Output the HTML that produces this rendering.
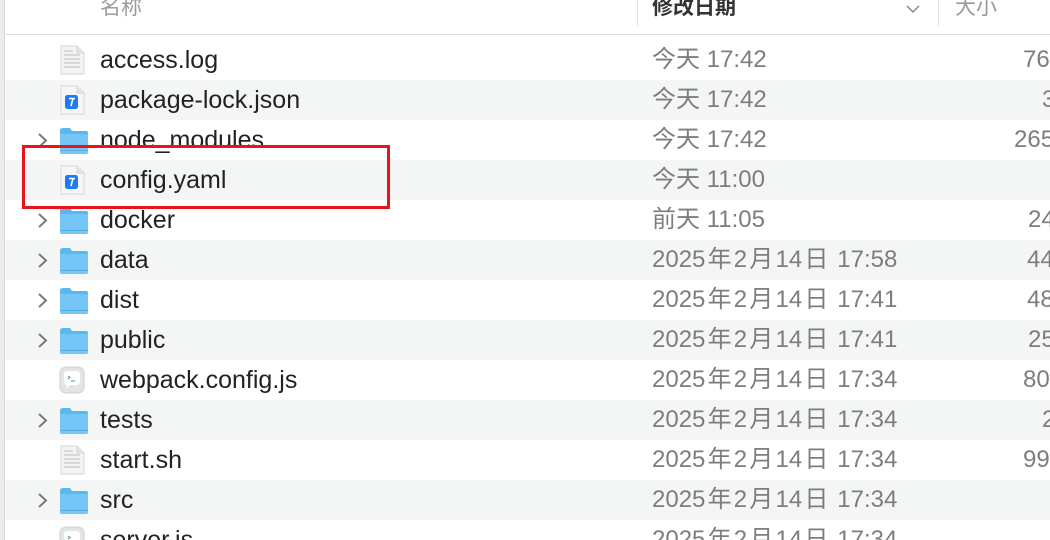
<!DOCTYPE html>
<html style="overflow:hidden;width:1050px;height:540px"><head><meta charset="utf-8"><style>
*{margin:0;padding:0;box-sizing:border-box}
body{width:1050px;height:540px;overflow:hidden;background:#fff;position:relative;font-family:"Liberation Sans","Noto Sans CJK SC",sans-serif}
.strip{position:absolute;left:0;top:0;width:5px;height:540px;background:#ececec;border-right:1px solid #d8d8d8}
.hdr{position:absolute;left:6px;top:0;width:1044px;height:35px;border-bottom:1px solid #dcdcdc;background:#fff}
.h{position:absolute;top:-9px;font-size:21px;line-height:34px;color:#9a9a9a}
.sep{position:absolute;top:0;width:1px;height:26px;background:#e2e2e2}
.row{position:absolute;left:6px;width:1044px;height:40px;overflow:hidden}
.g{background:#f4f5f5}
.n{position:absolute;left:94px;top:0;line-height:40px;font-size:25px;color:#222}
.d{position:absolute;left:646px;top:0;line-height:40px;font-size:24px;color:#7d7d7d;white-space:nowrap}
.d i{font-style:normal;margin:0 2.2px}
.s{position:absolute;top:0;line-height:40px;font-size:24px;color:#7d7d7d;white-space:nowrap}
.chev{position:absolute;left:31px;top:13px}
.ic{position:absolute;left:53px;top:5px}
.red{position:absolute;left:22px;top:145px;width:368px;height:64px;border:3px solid #e8141c}
</style></head><body>
<div class="strip"></div>
<div class="hdr">
<div class="h" style="left:94px">名称</div>
<div class="sep" style="left:631px"></div>
<div class="h" style="left:646px;color:#333;font-weight:bold">修改日期</div>
<svg style="position:absolute;left:900px;top:4px" width="14" height="10"><path d="M1 2 L7 8 L13 2" fill="none" stroke="#8a8a8a" stroke-width="1.5"/></svg>
<div class="sep" style="left:932px"></div>
<div class="h" style="left:949px">大小</div>
</div>

<svg width="0" height="0" style="position:absolute">
<defs>
<symbol id="fold" viewBox="0 0 30 30"><path d="M1 6 Q1 3 4 3 L11 3 L13 6 L27 6 Q29 6 29 8 L29 27 Q29 29 27 29 L3 29 Q1 29 1 27 Z" fill="#5cb6ef"/><path d="M1 9 L29 9 L29 27 Q29 29 27 29 L3 29 Q1 29 1 27 Z" fill="#74c6f6"/><rect x="1" y="25" width="28" height="1" fill="#5aaee6"/></symbol>
<symbol id="doc" viewBox="0 0 26 30"><path d="M2 1 L18 1 L25 8 L25 29 L2 29 Z" fill="#f3f3f3" stroke="#d6d6d6"/><path d="M18 1 L18 8 L25 8" fill="#e3e3e3" stroke="#d6d6d6"/><g stroke="#bdbdbd" stroke-width="1"><line x1="5" y1="6" x2="14" y2="6"/><line x1="5" y1="10" x2="21" y2="10"/><line x1="5" y1="14" x2="21" y2="14"/><line x1="5" y1="18" x2="21" y2="18"/><line x1="5" y1="22" x2="21" y2="22"/></g></symbol>
<symbol id="json" viewBox="0 0 26 30"><path d="M2 1 L18 1 L25 8 L25 29 L2 29 Z" fill="#f6f6f6" stroke="#d6d6d6"/><path d="M18 1 L18 8 L25 8" fill="#e3e3e3" stroke="#d6d6d6"/><rect x="6" y="10" width="13" height="14" rx="2.5" fill="#1e7cf2"/><path d="M10 13.5 L16 13.5 M14 13.5 L12 21" stroke="#fff" stroke-width="1.6"/></symbol>
<symbol id="js" viewBox="0 0 26 30"><rect x="1" y="2" width="24" height="26" rx="6" fill="#e4e4e4" stroke="#d0d0d0"/><path d="M5 9 Q5 6 9 6 L17 6 Q21 6 21 10 L21 17 Q21 20 17 20 L11 20 L7 24 L8 20 Q5 20 5 17 Z" fill="#fff"/><path d="M9 11 L11 12.5 L9 14 M12 16 L16 16" stroke="#3aa05a" stroke-width="1" fill="none"/></symbol>
<symbol id="chv" viewBox="0 0 12 15"><path d="M2 1 L9 7.5 L2 14" fill="none" stroke="#7a7a7a" stroke-width="2"/></symbol>
</defs></svg>

<div class="row" style="top:40px"><svg class="ic" width="26" height="30"><use href="#doc"/></svg><div class="n">access.log</div><div class="d">今天 17:42</div><div class="s" style="left:1017px">76</div></div>
<div class="row g" style="top:80px"><svg class="ic" width="26" height="30"><use href="#json"/></svg><div class="n">package-lock.json</div><div class="d">今天 17:42</div><div class="s" style="left:1036px">3</div></div>
<div class="row" style="top:120px"><svg class="chev" width="12" height="15"><use href="#chv"/></svg><svg class="ic" width="30" height="30"><use href="#fold"/></svg><div class="n">node_modules</div><div class="d">今天 17:42</div><div class="s" style="left:1008px">265</div></div>
<div class="row g" style="top:160px"><svg class="ic" width="26" height="30"><use href="#json"/></svg><div class="n">config.yaml</div><div class="d">今天 11:00</div></div>
<div class="row" style="top:200px"><svg class="chev" width="12" height="15"><use href="#chv"/></svg><svg class="ic" width="30" height="30"><use href="#fold"/></svg><div class="n">docker</div><div class="d">前天 11:05</div><div class="s" style="left:1022px">24</div></div>
<div class="row g" style="top:240px"><svg class="chev" width="12" height="15"><use href="#chv"/></svg><svg class="ic" width="30" height="30"><use href="#fold"/></svg><div class="n">data</div><div class="d">2025<i>年</i>2<i>月</i>14<i>日</i> 17:58</div><div class="s" style="left:1021px">44</div></div>
<div class="row" style="top:280px"><svg class="chev" width="12" height="15"><use href="#chv"/></svg><svg class="ic" width="30" height="30"><use href="#fold"/></svg><div class="n">dist</div><div class="d">2025<i>年</i>2<i>月</i>14<i>日</i> 17:41</div><div class="s" style="left:1021px">48</div></div>
<div class="row g" style="top:320px"><svg class="chev" width="12" height="15"><use href="#chv"/></svg><svg class="ic" width="30" height="30"><use href="#fold"/></svg><div class="n">public</div><div class="d">2025<i>年</i>2<i>月</i>14<i>日</i> 17:41</div><div class="s" style="left:1022px">25</div></div>
<div class="row" style="top:360px"><svg class="ic" width="26" height="30"><use href="#js"/></svg><div class="n">webpack.config.js</div><div class="d">2025<i>年</i>2<i>月</i>14<i>日</i> 17:34</div><div class="s" style="left:1017px">80</div></div>
<div class="row g" style="top:400px"><svg class="chev" width="12" height="15"><use href="#chv"/></svg><svg class="ic" width="30" height="30"><use href="#fold"/></svg><div class="n">tests</div><div class="d">2025<i>年</i>2<i>月</i>14<i>日</i> 17:34</div><div class="s" style="left:1036px">2</div></div>
<div class="row" style="top:440px"><svg class="ic" width="26" height="30"><use href="#doc"/></svg><div class="n">start.sh</div><div class="d">2025<i>年</i>2<i>月</i>14<i>日</i> 17:34</div><div class="s" style="left:1017px">99</div></div>
<div class="row g" style="top:480px"><svg class="chev" width="12" height="15"><use href="#chv"/></svg><svg class="ic" width="30" height="30"><use href="#fold"/></svg><div class="n">src</div><div class="d">2025<i>年</i>2<i>月</i>14<i>日</i> 17:34</div></div>
<div class="row" style="top:520px;height:20px"><svg class="ic" width="26" height="30"><use href="#js"/></svg><div class="n">server.js</div><div class="d">2025<i>年</i>2<i>月</i>14<i>日</i> 17:34</div></div>
<div class="red"></div>
</body></html>
